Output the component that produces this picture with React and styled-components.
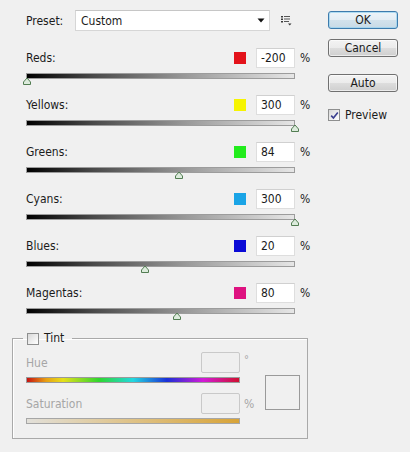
import React from 'react';
import styled, { createGlobalStyle } from 'styled-components';

const Global = createGlobalStyle`
  html, body { margin: 0; padding: 0; background: #f0f0f0; }
  body {
    font-family: "DejaVu Sans Condensed", "DejaVu Sans", sans-serif;
    font-size: 12px;
    color: #1b1b1b;
  }
`;

const Dialog = styled.div`
  width: 410px;
  height: 452px;
  display: flex;
  background: #f0f0f0;
  overflow: hidden;
`;

const Main = styled.div`
  width: 296px;
  padding: 10px 0 0 12px;
  display: flex;
  flex-direction: column;
`;

const PresetRow = styled.div`
  display: flex;
  align-items: center;
  height: 21px;
  margin-left: 14px;
`;

const PresetLabel = styled.span`
  width: 49px;
`;

const Select = styled.div`
  width: 195px;
  height: 21px;
  box-sizing: border-box;
  background: #fff;
  border: 1px solid #d6d6d6;
  border-top-color: #c6c6c6;
  display: flex;
  align-items: center;
  padding: 0 4px 0 5px;
`;

const SelectText = styled.span`
  flex: 1;
`;

const ListIcon = styled.svg`
  margin-left: 11px;
  display: block;
`;

const SliderList = styled.div`
  margin-top: 17px;
  margin-left: 14px;
  display: flex;
  flex-direction: column;
`;

const SliderRow = styled.div`
  height: 47px;
  display: grid;
  grid-template-columns: 269px auto;
  grid-template-rows: 20px auto;
  row-gap: 5px;
  align-content: start;
`;

const TopLine = styled.div`
  display: flex;
  align-items: center;
`;

const Label = styled.span`
  flex: 1;
`;

const Swatch = styled.span`
  width: 12px;
  height: 12px;
  background: ${(p) => p.$color};
  margin-right: 10px;
`;

const NumBox = styled.div`
  width: 39px;
  height: 20px;
  box-sizing: border-box;
  background: #fff;
  border: 1px solid #dedede;
  border-top-color: #d0d0d0;
  display: flex;
  align-items: center;
  padding-left: 4px;
`;

const Unit = styled.span`
  align-self: center;
  margin-left: 5px;
  color: #1b1b1b;
`;

const Track = styled.div`
  position: relative;
  height: 6px;
  box-sizing: border-box;
  border: 1px solid #9c9c9c;
  background: linear-gradient(to right, #000 0%, #4a4a4a 25%, #9a9a9a 60%, #e6e6e6 100%);
`;

const Thumb = styled.svg`
  position: absolute;
  top: 3px;
  display: block;
`;

const Side = styled.div`
  width: 70px;
  margin-left: 20px;
  padding-top: 11px;
  display: flex;
  flex-direction: column;
`;

const Button = styled.button`
  width: 70px;
  height: 18px;
  box-sizing: border-box;
  padding: 0;
  margin-top: ${(p) => p.$gap || 0}px;
  border: 1px solid ${(p) => (p.$primary ? '#3d7bad' : '#707070')};
  border-radius: 3px;
  background: ${(p) =>
    p.$primary
      ? 'linear-gradient(#edf4f9 0%, #e3edf4 50%, #d3e2ec 51%, #c8dae6 100%)'
      : 'linear-gradient(#f3f3f3 0%, #ebebeb 50%, #dddddd 51%, #cfcfcf 100%)'};
  box-shadow: inset 0 0 0 1px ${(p) => (p.$primary ? 'rgba(150,210,240,0.7)' : 'rgba(255,255,255,0.6)')};
  font-family: inherit;
  font-size: 12px;
  line-height: 16px;
  color: #1b1b1b;
`;

const CheckRow = styled.label`
  display: flex;
  align-items: center;
  margin-top: ${(p) => p.$gap || 0}px;
`;

const CheckBox = styled.span`
  width: 12px;
  height: 12px;
  box-sizing: border-box;
  border: 1px solid #8e8f8f;
  background: linear-gradient(135deg, #d8d8d8 0%, #f4f4f4 70%, #ffffff 100%);
  margin-right: 5px;
  display: flex;
  align-items: center;
  justify-content: center;
`;

const CheckText = styled.span`
  color: #1b1b1b;
`;

const TintBox = styled.fieldset`
  margin: 2px 0 0 0;
  width: 296px;
  box-sizing: border-box;
  padding: 7px 0 14px 10px;
  border: 1px solid #a9a9a9;
  box-shadow: 1px 1px 0 #fff inset;
  min-width: 0;
`;

const Legend = styled.legend`
  padding: 0 8px 0 4px;
  margin: 0;
  height: 13px;
  line-height: 13px;
  display: flex;
  align-items: center;
`;

const TintBody = styled.div`
  margin-left: 3px;
  display: flex;
  align-items: flex-start;
`;

const TintGrid = styled.div`
  display: grid;
  grid-template-columns: 214px 16px;
  align-content: start;
`;

const TintTop = styled.div`
  display: flex;
  align-items: center;
  height: 21px;
  color: #a6a6a6;
  margin-top: ${(p) => p.$gap || 0}px;
`;

const DisabledBox = styled.div`
  width: 39px;
  height: 21px;
  box-sizing: border-box;
  border: 1px solid #c9c9c9;
  border-radius: 2px;
  background: #efefef;
`;

const TintUnit = styled.span`
  color: #a6a6a6;
  padding-left: 4px;
  margin-top: ${(p) => p.$gap || 0}px;
  align-self: ${(p) => (p.$top ? 'start' : 'center')};
  font-size: ${(p) => (p.$top ? '11px' : '12px')};
  line-height: ${(p) => (p.$top ? '16px' : 'normal')};
`;

const Bar = styled.div`
  height: 6px;
  box-sizing: border-box;
  margin-top: 4px;
  border: 1px solid ${(p) => (p.$hue ? '#9a9a9a' : '#a6a6a6')};
  background: ${(p) =>
    p.$hue
      ? `linear-gradient(to right, #c81212 0%, #e8a014 9%, #e6e01a 17%, #2ed62e 34%, #22d8e0 50%, #1a30d8 66%, #d21ad8 83%, #d01030 100%)`
      : `linear-gradient(to right, #e2e0da 0%, #e0c896 40%, #d8a438 100%)`};
`;

const ColorWell = styled.div`
  width: 35px;
  height: 35px;
  box-sizing: border-box;
  border: 1px solid #9a9a9a;
  margin: 23px 0 0 9px;
`;

const sliders = [
  { name: 'Reds', color: '#e3121a', value: -200 },
  { name: 'Yellows', color: '#f6f400', value: 300 },
  { name: 'Greens', color: '#22ec1c', value: 84 },
  { name: 'Cyans', color: '#1aa4e6', value: 300 },
  { name: 'Blues', color: '#0a0ad6', value: 20 },
  { name: 'Magentas', color: '#de1280', value: 80 },
];

const MIN = -200;
const MAX = 300;

function Slider({ name, color, value }) {
  const frac = (value - MIN) / (MAX - MIN);
  return (
    <SliderRow>
      <TopLine>
        <Label>{name}:</Label>
        <Swatch $color={color} />
        <NumBox>{value}</NumBox>
      </TopLine>
      <Unit>%</Unit>
      <Track>
        <Thumb
          width="10"
          height="9"
          viewBox="0 0 10 9"
          style={{ left: `${frac * 268 - 5}px` }}
        >
          <path
            d="M5 1 L8.5 5 L8.5 7.5 L1.5 7.5 L1.5 5 Z"
            fill="#dcebdc"
            stroke="#527d52"
            strokeWidth="1"
            strokeLinejoin="round"
          />
        </Thumb>
      </Track>
    </SliderRow>
  );
}

export default function App() {
  return (
    <>
      <Global />
      <Dialog>
        <Main>
          <PresetRow>
            <PresetLabel>Preset:</PresetLabel>
            <Select>
              <SelectText>Custom</SelectText>
              <svg width="8" height="5" viewBox="0 0 8 5">
                <path d="M0.5 0.5 L7.5 0.5 L4 4.5 Z" fill="#111" />
              </svg>
            </Select>
            <ListIcon width="11" height="11" viewBox="0 0 11 11">
              <rect x="0" y="1" width="2" height="1.5" fill="#3a3a3a" />
              <rect x="3" y="1" width="6" height="1" fill="#555" />
              <rect x="0" y="3.5" width="2" height="1.5" fill="#3a3a3a" />
              <rect x="3" y="3.5" width="6" height="1" fill="#555" />
              <rect x="0" y="6" width="2" height="1.5" fill="#3a3a3a" />
              <rect x="3" y="6" width="5" height="1" fill="#555" />
              <path d="M7 8.5 L10.5 8.5 L8.75 10.5 Z" fill="#333" />
            </ListIcon>
          </PresetRow>

          <SliderList>
            {sliders.map((s) => (
              <Slider key={s.name} {...s} />
            ))}
          </SliderList>

          <TintBox>
            <Legend>
              <CheckBox />
              <CheckText>Tint</CheckText>
            </Legend>
            <TintBody>
              <TintGrid>
                <TintTop>
                  <Label>Hue</Label>
                  <DisabledBox />
                </TintTop>
                <TintUnit $top>°</TintUnit>
                <Bar $hue />
                <span />
                <TintTop $gap={10}>
                  <Label>Saturation</Label>
                  <DisabledBox />
                </TintTop>
                <TintUnit $gap={10}>%</TintUnit>
                <Bar />
                <span />
              </TintGrid>
              <ColorWell />
            </TintBody>
          </TintBox>
        </Main>

        <Side>
          <Button $primary>OK</Button>
          <Button $gap={10}>Cancel</Button>
          <Button $gap={17}>Auto</Button>
          <CheckRow $gap={16}>
            <CheckBox>
              <svg width="9" height="9" viewBox="0 0 9 9">
                <path
                  d="M1.2 4.6 L3.4 7 L7.8 1.4"
                  fill="none"
                  stroke="#3b3f8f"
                  strokeWidth="1.6"
                />
              </svg>
            </CheckBox>
            <CheckText>Preview</CheckText>
          </CheckRow>
        </Side>
      </Dialog>
    </>
  );
}
